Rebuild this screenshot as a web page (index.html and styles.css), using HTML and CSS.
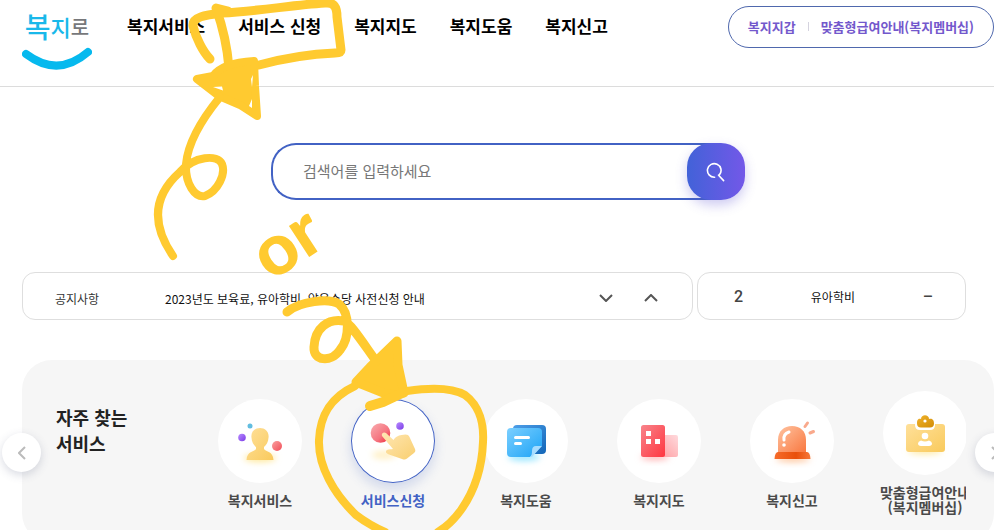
FILE: index.html
```html
<!DOCTYPE html>
<html lang="ko">
<head>
<meta charset="utf-8">
<meta name="viewport" content="width=device-width, initial-scale=1">
<title>복지로</title>
<link rel="stylesheet" href="styles.css">
</head>
<body>
<header class="header">
  <a class="logo" href="#">
    <span class="logo-text"><span class="logo-a">복</span><span class="logo-b">지</span><span class="logo-c">로</span></span>
    <svg class="logo-smile" viewBox="0 0 70 24" aria-hidden="true"><path d="M4 8Q36 32 66 6" fill="none" stroke="#06b9ee" stroke-width="8" stroke-linecap="round"/></svg>
  </a>
  <nav class="nav">
    <a href="#">복지서비스</a>
    <a href="#">서비스 신청</a>
    <a href="#">복지지도</a>
    <a href="#">복지도움</a>
    <a href="#">복지신고</a>
  </nav>
  <div class="member">
    <a href="#">복지지갑</a>
    <span class="member-line"></span>
    <a href="#">맞춤형급여안내(복지멤버십)</a>
  </div>
</header>

<main class="main">
  <form class="search">
    <input class="search-input" type="text" placeholder="검색어를 입력하세요" aria-label="검색어">
    <button class="search-button" type="button" aria-label="검색">
      <svg width="20" height="20" viewBox="0 0 20 20" fill="none" stroke="#fff" stroke-width="1.6" stroke-linecap="round"><path d="M8.6 15.2A6.8 6.8 0 1 1 13.6 12.6M12.6 13.2L17.6 18.6"/></svg>
    </button>
  </form>

  <div class="boards">
    <section class="card notice">
      <h2 class="notice-title">공지사항</h2>
      <a class="notice-link" href="#">2023년도 보육료, 유아학비, 양육수당 사전신청 안내</a>
      <button class="arrow" type="button" aria-label="다음"><svg width="14" height="8" viewBox="0 0 14 8"><path d="M1 1l6 6 6-6"/></svg></button>
      <button class="arrow" type="button" aria-label="이전"><svg width="14" height="8" viewBox="0 0 14 8"><path d="M1 7l6-6 6 6"/></svg></button>
    </section>
    <section class="card keyword">
      <span class="rank">2</span>
      <a href="#">유아학비</a>
      <span class="rank">–</span>
    </section>
  </div>

  <section class="panel">
    <h2 class="panel-title">자주 찾는<br>서비스</h2>
    <ul class="services">
      <li><a class="service" href="#">
        <span class="disc"><svg width="84" height="84" viewBox="0 0 84 84">
          <defs>
            <linearGradient id="gold" x1="0" y1="0" x2="1" y2="1"><stop offset="0" stop-color="#ffe09a"/><stop offset="1" stop-color="#f9ca5c"/></linearGradient>
            <linearGradient id="red" x1="0" y1="0" x2="1" y2="1"><stop offset="0" stop-color="#f9a0a0"/><stop offset="1" stop-color="#f24e58"/></linearGradient>
            <linearGradient id="violet" x1="0" y1="0" x2="1" y2="1"><stop offset="0" stop-color="#b98cff"/><stop offset="1" stop-color="#7a3be6"/></linearGradient>
            <filter id="glow" x="-50%" y="-100%" width="200%" height="300%"><feGaussianBlur stdDeviation="3"/></filter>
          </defs>
          <ellipse cx="42" cy="59" rx="16" ry="4" fill="#ffe89a" filter="url(#glow)"/>
          <path d="M42 29c5 0 9 3.500 8.600 9-.3 5-2.200 8-4.600 10v2c2 3 9 2 9.500 11h-27c.5-9 7.500-8 9.500-11v-2c-2.400-2-4.300-5-4.600-10-.4-5.500 3.600-9 8.600-9z" fill="url(#gold)"/>
          <circle cx="32" cy="27" r="2.500" fill="#62bde0"/><circle cx="24" cy="38.500" r="3.800" fill="url(#violet)"/><circle cx="59" cy="47" r="5" fill="url(#red)"/>
        </svg></span>
        <span class="label">복지서비스</span></a></li>
      <li><a class="service current" href="#">
        <span class="disc"><svg width="84" height="84" viewBox="0 0 84 84">
          <defs>
            <linearGradient id="tap" x1="0" y1="0" x2="1" y2="1"><stop offset="0" stop-color="#f9adb0"/><stop offset=".6" stop-color="#f57580"/><stop offset="1" stop-color="#ee2030"/></linearGradient>
            <linearGradient id="hand" x1="0" y1="0" x2="1" y2="1"><stop offset="0" stop-color="#ffe7b4"/><stop offset="1" stop-color="#f9cf70"/></linearGradient>
          </defs>
          <ellipse cx="33" cy="56" rx="12" ry="4" fill="#fff0c4" filter="url(#glow)"/>
          <circle cx="29.500" cy="34" r="9.800" fill="url(#tap)"/><circle cx="49" cy="27" r="3.800" fill="url(#violet)"/>
          <path d="M31 37c-1-3 2-4.500 4-3l7.500 7c2.500-3.500 4.500-4.500 8-5 4-1 7-1 8 2l5.500 12c.8 2 0 3-1 4l-7 5.500c-2 1.500-3 1.300-5 .5L38 55.500c-3-1-4-3-2-4.500 1.500-1 4-.5 6-1z" fill="url(#hand)"/>
        </svg></span>
        <span class="label">서비스신청</span></a></li>
      <li><a class="service" href="#">
        <span class="disc"><svg width="84" height="84" viewBox="0 0 84 84">
          <defs>
            <linearGradient id="sky" x1="0" y1="0" x2="1" y2="1"><stop offset="0" stop-color="#7ccfff"/><stop offset="1" stop-color="#1ca3f6"/></linearGradient>
            <linearGradient id="blue" x1="0" y1="0" x2="1" y2="1"><stop offset="0" stop-color="#4d9ee8"/><stop offset="1" stop-color="#1266b8"/></linearGradient>
          </defs>
          <ellipse cx="40" cy="58" rx="16" ry="4" fill="#9be6ff" filter="url(#glow)"/>
          <rect x="29" y="26" width="33" height="29" rx="4" fill="url(#blue)"/>
          <path d="M27 29h27a4 4 0 0 1 4 4v14L46 58H27a4 4 0 0 1-4-4V33a4 4 0 0 1 4-4z" fill="url(#sky)"/>
          <path d="M58 47h-6q-4 0-4 5 0 5-2 6h2z" fill="#a6dcff"/>
          <path d="M31.500 38.500h13M31.500 44.500h5" stroke="#fff" stroke-width="3" stroke-linecap="round"/>
        </svg></span>
        <span class="label">복지도움</span></a></li>
      <li><a class="service" href="#">
        <span class="disc"><svg width="84" height="84" viewBox="0 0 84 84">
          <defs>
            <linearGradient id="tower" x1="0" y1="0" x2="1" y2="1"><stop offset="0" stop-color="#f8848b"/><stop offset="1" stop-color="#ff3640"/></linearGradient>
            <linearGradient id="annex" x1="0" y1="1" x2="1" y2="0"><stop offset="0" stop-color="#ff9a9e"/><stop offset="1" stop-color="#ffdadd"/></linearGradient>
          </defs>
          <ellipse cx="38" cy="58" rx="14" ry="3" fill="#ffb0b0" filter="url(#glow)"/>
          <rect x="40" y="36" width="21" height="22" rx="2" fill="url(#annex)"/>
          <rect x="24" y="26" width="24" height="32" rx="2.500" fill="url(#tower)"/>
          <path d="M29 32h5v5h-5zM29 40h5v5h-5zM38 40h5v5h-5z" fill="#fff"/>
        </svg></span>
        <span class="label">복지지도</span></a></li>
      <li><a class="service" href="#">
        <span class="disc"><svg width="84" height="84" viewBox="0 0 84 84">
          <defs>
            <linearGradient id="dome" x1="0" y1="0" x2="1" y2="1"><stop offset="0" stop-color="#ffc3a0"/><stop offset="1" stop-color="#f9773f"/></linearGradient>
            <linearGradient id="base" x1="0" y1="0" x2="1" y2="0"><stop offset="0" stop-color="#f66b2a"/><stop offset=".6" stop-color="#e94f0a"/><stop offset="1" stop-color="#f6783a"/></linearGradient>
          </defs>
          <ellipse cx="43" cy="60" rx="17" ry="3" fill="#ffc49a" filter="url(#glow)"/>
          <path d="M28 54V41c0-9 6-14 14-14S56 32 56 41v13z" fill="url(#dome)"/>
          <path d="M28 53h29q3 0 3.500 7h-36q.5-7 3.500-7z" fill="url(#base)"/>
          <path d="M39 33q-6 2-5 8" fill="none" stroke="#fff" stroke-width="3" stroke-linecap="round"/><circle cx="34" cy="46" r="1.800" fill="#fff"/>
          <path d="M55 27.500l2.500-3.500M60 34l3.500-1.500" stroke="#f9a98c" stroke-width="3" stroke-linecap="round"/>
        </svg></span>
        <span class="label">복지신고</span></a></li>
      <li><a class="service" href="#">
        <span class="disc"><svg width="84" height="84" viewBox="0 0 84 84">
          <defs><linearGradient id="clip" x1="0" y1="0" x2="1" y2="1"><stop offset="0" stop-color="#f0b32c"/><stop offset="1" stop-color="#d28c06"/></linearGradient></defs>
          <ellipse cx="42" cy="60" rx="17" ry="3" fill="#ffe89a" filter="url(#glow)"/>
          <rect x="23" y="33" width="39" height="28" rx="3" fill="url(#gold)"/>
          <path d="M32 33h20v1q0 5-5 5H37q-5 0-5-5z" fill="#fff"/>
          <path d="M38 28c0-5 8-5 8 0 4-1 5 2 5 4.500q0 4-4 4H38q-4 0-4-4C34 30 34.500 27 38 28z" fill="url(#clip)"/><circle cx="42" cy="30" r="1.600" fill="#fff"/>
          <circle cx="42" cy="45" r="3.300" fill="#fff"/><path d="M38 49.500q4 2 8 0 3 1 3 3t-3 2.500h-8q-3-.5-3-2.500t3-3z" fill="#fff"/>
        </svg></span>
        <span class="label">맞춤형급여안내<br>(복지멤버십)</span></a></li>
    </ul>
    <button class="slide prev" type="button" aria-label="이전 서비스"><svg width="8" height="14" viewBox="0 0 8 14"><path d="M7 1L1 7l6 6"/></svg></button>
    <button class="slide next" type="button" aria-label="다음 서비스"><svg width="8" height="14" viewBox="0 0 8 14"><path d="M1 1l6 6-6 6"/></svg></button>
  </section>
</main>

<svg class="marker" width="994" height="530" viewBox="0 0 994 530">
  <g fill="none" stroke="#ffca30" stroke-linecap="round" stroke-linejoin="round">
    <path stroke-width="9" d="M210 59C203 52 196 38 193 26C192 17 205 15 222 13C260 11 292 5 325 3C334 2 337 7 337 17L341 50Q341 53 335 53C310 54 285 58 259 65"/>
    <path stroke-width="9" d="M228 11L216 8C221 22 227 43 229 68"/>
    <path stroke-width="8" fill="#ffca30" d="M197 79L213 76C220 66 236 62 254 61L255 86L257 116L240 105L219 96Z"/>
    <path stroke-width="8" d="M220 97C202 119 188 142 186 164C185 184 195 198 205 196C218 191 226 174 222 164C218 154 194 156 180 172C153 196 151 224 173 256"/>
    <path stroke-width="9" d="M287 312C300 301 329 298 339 304C350 313 350 338 340 350C331 363 313 361 314 347C315 328 328 318 344 321C351 324 361 340 376 361"/>
    <path stroke-width="9" fill="#ffca30" d="M397 341L370 367L356 382L386 394L404 393L398 365Z"/>
    <path stroke-width="10" d="M370 406L383 402L402 393"/>
    <path stroke-width="8" d="M355 386C329 398 320 417 319 440C318 466 334 494 356 515Q369 525 385 532M407 391C434 387 453 388 465 395C480 406 484 425 483 442C482 470 473 493 461 510Q451 524 438 532"/>
  </g>
  <path d="M213 87l9-.5 1 4zM251 79l2-4-1 12zM252 99v9l-3-2z" fill="#fff"/>
  <text class="marker-text" transform="translate(271 282) rotate(-33)">or</text>
</svg>
</body>
</html>
```

FILE: styles.css
```css
* { box-sizing: border-box; }

body {
  margin: 0;
  height: 100vh;
  position: relative;
  overflow: hidden;
  background: #fff;
  color: #111;
  font-family: "Noto Sans CJK KR", "Noto Sans", sans-serif;
}

a { color: inherit; text-decoration: none; }
h2 { margin: 0; }
button { border: 0; padding: 0; display: grid; place-items: center; font: inherit; }

.header {
  display: flex;
  align-items: flex-start;
  min-height: 87px;
  padding: 6px 0 0 22px;
  border-bottom: 1px solid #dcdcdc;
}

.logo { width: 70px; margin-right: 35px; }
.logo-text {
  display: flex;
  align-items: center;
  justify-content: center;
  height: 40px;
  font-weight: 500;
  white-space: nowrap;
}
.logo-a, .logo-b { color: #19b8ea; }
.logo-a { font-size: 28px; }
.logo-b { font-size: 22px; }
.logo-c { font-size: 20px; color: #77787b; }
.logo-smile { display: block; width: 70px; height: 24px; }

.nav {
  display: flex;
  gap: 33px;
  line-height: 40px;
  font-size: 17px;
  font-weight: 700;
  white-space: nowrap;
  color: #000;
}

.member {
  display: flex;
  align-items: center;
  gap: 12px;
  height: 42px;
  margin-left: auto;
  padding: 0 19px 2px;
  border: 1px solid #4f68ad;
  border-radius: 21px;
  font-size: 13px;
  font-weight: 700;
  white-space: nowrap;
  color: #7358cc;
}
.member-line { width: 1px; height: 9px; background: #d5d3df; }

.main { padding-left: 22px; }

.search {
  display: flex;
  width: 474px;
  height: 57px;
  margin: 56px auto 72px;
}
.search-input {
  flex: 1;
  min-width: 0;
  margin-right: -24px;
  padding: 0 54px 2px 30px;
  border: 2px solid #4262c4;
  border-right: 0;
  border-radius: 25px 0 0 25px;
  background: #fff;
  font: 15px "Noto Sans CJK KR", sans-serif;
  color: #111;
}
.search-input::placeholder { color: #777; opacity: 1; }
.search-button {
  position: relative;
  width: 58px;
  border-radius: 24px;
  background: linear-gradient(90deg, #4262d8, #7358e8);
  box-shadow: 0 5px 12px rgba(90, 80, 210, .3);
}

.boards {
  display: grid;
  grid-template-columns: 671fr 269fr;
  gap: 4px;
  margin: 0 28px 40px 0;
}
.card {
  display: flex;
  align-items: center;
  height: 48px;
  border: 1px solid #dedede;
  border-radius: 13px;
  font-size: 12px;
  white-space: nowrap;
}
.notice { gap: 30px; padding: 4px 34px 0 32px; }
.notice-title { width: 80px; font-size: 12px; font-weight: 400; color: #333; }
.notice-link { flex: 1; }
.arrow { width: 15px; height: 20px; background: none; }
.arrow svg { fill: none; stroke: #555; stroke-width: 2; }
.keyword { justify-content: space-between; padding: 0 32px 0 36px; }
.rank { font: 500 16px Roboto, sans-serif; color: #444; }

.panel {
  position: relative;
  display: flex;
  justify-content: space-between;
  align-items: flex-start;
  padding: 0 28px 0 34px;
  border-radius: 30px;
  background: #f6f6f6;
}
.panel-title {
  padding-top: 44px;
  font-size: 18px;
  font-weight: 700;
  line-height: 26px;
  color: #222;
  white-space: nowrap;
}
.services {
  display: flex;
  align-items: center;
  gap: 49px;
  width: 748px;
  margin: 0;
  padding: 31px 0 28px;
  overflow: hidden;
  list-style: none;
}
.service {
  display: flex;
  flex-direction: column;
  align-items: center;
  gap: 10px;
  width: 84px;
}
.disc { width: 84px; height: 84px; border-radius: 50%; background: #fff; }
.disc svg { display: block; }
.label {
  font-size: 14px;
  font-weight: 700;
  line-height: 15px;
  text-align: center;
  white-space: nowrap;
  color: #4a4a4a;
}
.current .disc { box-shadow: inset 0 0 0 1px #4262c4, 0 6px 12px rgba(66, 98, 196, .2); }
.current .label { color: #4262c4; }

.slide {
  position: absolute;
  top: 73px;
  width: 39px;
  height: 39px;
  border-radius: 50%;
  background: #fff;
  box-shadow: 0 3px 10px rgba(60, 70, 110, .2);
}
.slide svg { fill: none; stroke: #bbb; stroke-width: 2; }
.prev { left: -20px; }
.next { right: -20px; }

.marker { position: absolute; top: 0; left: 0; pointer-events: none; }
.marker-text { font: 900 72px Lato, sans-serif; fill: #ffca30; }
```
